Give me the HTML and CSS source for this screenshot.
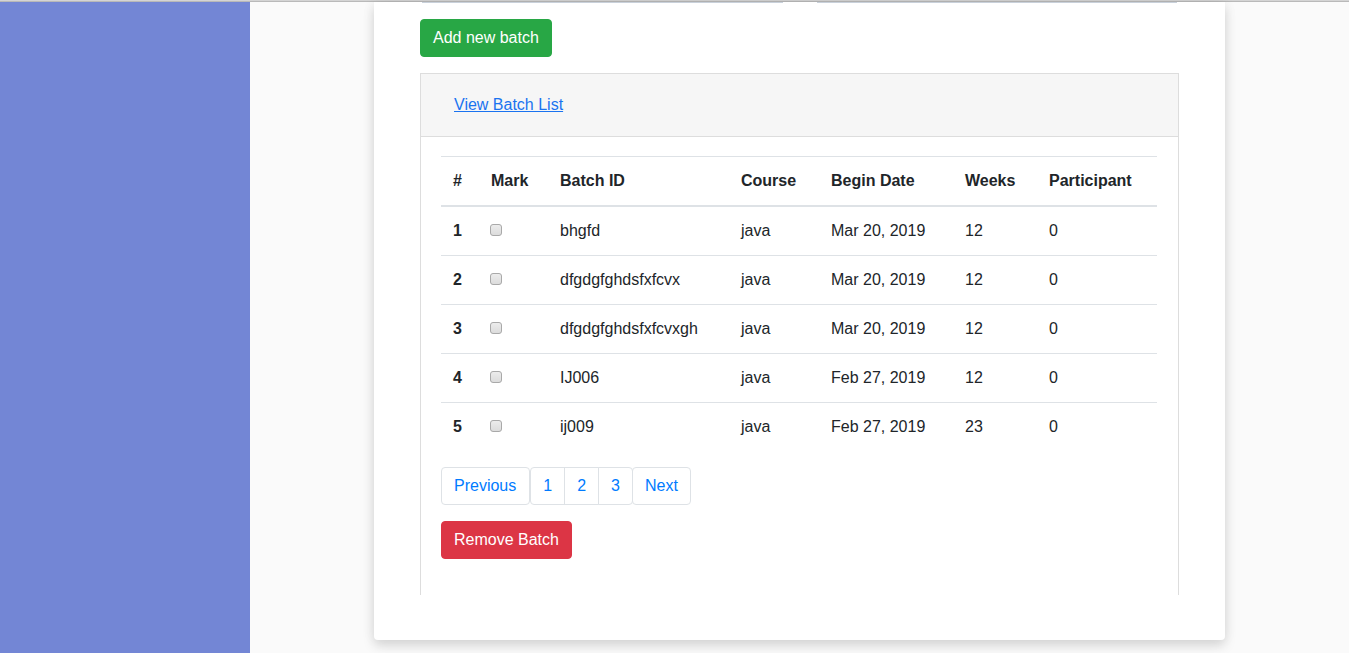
FILE: index.html
```html
<!DOCTYPE html>
<html lang="en">
<head>
<meta charset="utf-8">
<title>Batches</title>
<link rel="stylesheet" href="styles.css">
</head>
<body>
<div class="topline"></div>
<div class="layout">
  <nav class="sidebar"></nav>
  <main class="main">
    <section class="card">
      <div class="form-row">
        <div class="input-stub"></div>
        <div class="input-stub"></div>
      </div>
      <button class="btn btn-success">Add new batch</button>
      <div class="panel">
        <div class="panel-heading">
          <a href="#" class="panel-link">View Batch List</a>
        </div>
        <div class="panel-body">
          <table class="table">
            <thead>
              <tr>
                <th class="c-num">#</th>
                <th class="c-mark">Mark</th>
                <th class="c-id">Batch ID</th>
                <th class="c-course">Course</th>
                <th class="c-date">Begin Date</th>
                <th class="c-weeks">Weeks</th>
                <th class="c-part">Participant</th>
              </tr>
            </thead>
            <tbody>
              <tr><th>1</th><td><input type="checkbox" class="chk"></td><td>bhgfd</td><td>java</td><td>Mar 20, 2019</td><td>12</td><td>0</td></tr>
              <tr><th>2</th><td><input type="checkbox" class="chk"></td><td>dfgdgfghdsfxfcvx</td><td>java</td><td>Mar 20, 2019</td><td>12</td><td>0</td></tr>
              <tr><th>3</th><td><input type="checkbox" class="chk"></td><td>dfgdgfghdsfxfcvxgh</td><td>java</td><td>Mar 20, 2019</td><td>12</td><td>0</td></tr>
              <tr><th>4</th><td><input type="checkbox" class="chk"></td><td>IJ006</td><td>java</td><td>Feb 27, 2019</td><td>12</td><td>0</td></tr>
              <tr><th>5</th><td><input type="checkbox" class="chk"></td><td>ij009</td><td>java</td><td>Feb 27, 2019</td><td>23</td><td>0</td></tr>
            </tbody>
          </table>
          <nav class="pagination">
            <a href="#" class="page-link solo">Previous</a>
            <div class="page-group">
              <a href="#" class="page-link">1</a>
              <a href="#" class="page-link">2</a>
              <a href="#" class="page-link">3</a>
            </div>
            <a href="#" class="page-link solo">Next</a>
          </nav>
          <button class="btn btn-danger">Remove Batch</button>
        </div>
      </div>
    </section>
  </main>
</div>
</body>
</html>
```

FILE: styles.css
```css
* { box-sizing: border-box; }
html, body { margin: 0; padding: 0; }
body {
  font-family: "Liberation Sans", Arial, sans-serif;
  font-size: 16px;
  line-height: 1.5;
  color: #212529;
  background: #fafafa;
  height: 653px;
  overflow: hidden;
  display: flex;
  flex-direction: column;
}
.topline {
  height: 2px;
  background: #b9b9b9;
  border-top: 1px solid #d4d4d4;
  flex: none;
}
.layout {
  flex: 1;
  display: flex;
  min-height: 0;
}
.sidebar {
  width: 250px;
  flex: none;
  background: #7386d5;
}
.main {
  flex: 1;
  background: #fafafa;
  display: flex;
  justify-content: center;
  align-items: flex-start;
}
.card {
  width: 851px;
  background: #fff;
  padding: 0 46px 45px 46px;
  border-radius: 0 0 4px 4px;
  box-shadow: 0 6px 12px rgba(0,0,0,0.13), 0 0 14px rgba(0,0,0,0.06);
}
.form-row {
  display: flex;
  gap: 34px;
  padding: 0 2px;
  height: 1px;
}
.input-stub {
  flex: 1;
  height: 1px;
  background: #c9d1db;
}
.btn {
  display: inline-block;
  font-family: inherit;
  font-size: 16px;
  line-height: 24px;
  padding: 6px 12px;
  border: 1px solid transparent;
  border-radius: 4px;
  color: #fff;
  cursor: pointer;
}
.btn-success {
  background: #28a745;
  border-color: #28a745;
  margin-top: 16px;
}
.btn-danger {
  background: #dc3545;
  border-color: #dc3545;
}
.panel {
  margin-top: 16px;
  border: 1px solid #dddddd;
  border-bottom: none;
}
.panel-heading {
  height: 63px;
  background: #f6f6f6;
  border-bottom: 1px solid #dddddd;
  display: flex;
  align-items: center;
  padding: 0 33px;
}
.panel-link {
  color: #1a73f0;
  text-decoration: underline;
}
.panel-body {
  padding: 19px 21px 36px 20px;
}
.table {
  width: 100%;
  border-collapse: collapse;
  margin-bottom: 16px;
}
.table th, .table td {
  padding: 12px;
  text-align: left;
  vertical-align: top;
  border-top: 1px solid #dee2e6;
  line-height: 24px;
}
.table thead th {
  border-bottom: 2px solid #dee2e6;
  font-weight: bold;
  vertical-align: bottom;
}
.table tbody th { font-weight: bold; }
.c-num { width: 38px; }
.c-mark { width: 69px; }
.c-id { width: 181px; }
.c-course { width: 90px; }
.c-date { width: 134px; }
.c-weeks { width: 84px; }
.c-part { width: 120px; }
.chk {
  -webkit-appearance: none;
  appearance: none;
  margin: 5px 0 0 -1px;
  width: 12px;
  height: 12px;
  vertical-align: top;
  border: 1px solid #a9a9a9;
  border-radius: 3px;
  background: linear-gradient(#ececec, #dcdcdc);
}
.pagination {
  display: flex;
  margin-bottom: 16px;
}
.page-link {
  display: block;
  padding: 8px 12px;
  line-height: 20px;
  color: #007bff;
  text-decoration: none;
  border: 1px solid #dee2e6;
  background: #fff;
}
.solo { border-radius: 4px; }
.solo:first-child { padding-right: 13px; }
.page-group { display: flex; }
.page-group .page-link { margin-left: -1px; }
.page-group .page-link:first-child {
  margin-left: 0;
  border-radius: 4px 0 0 4px;
}
.page-group .page-link:last-child { border-radius: 0 4px 4px 0; }
.pagination > .solo:last-child { margin-left: -1px; }
```
